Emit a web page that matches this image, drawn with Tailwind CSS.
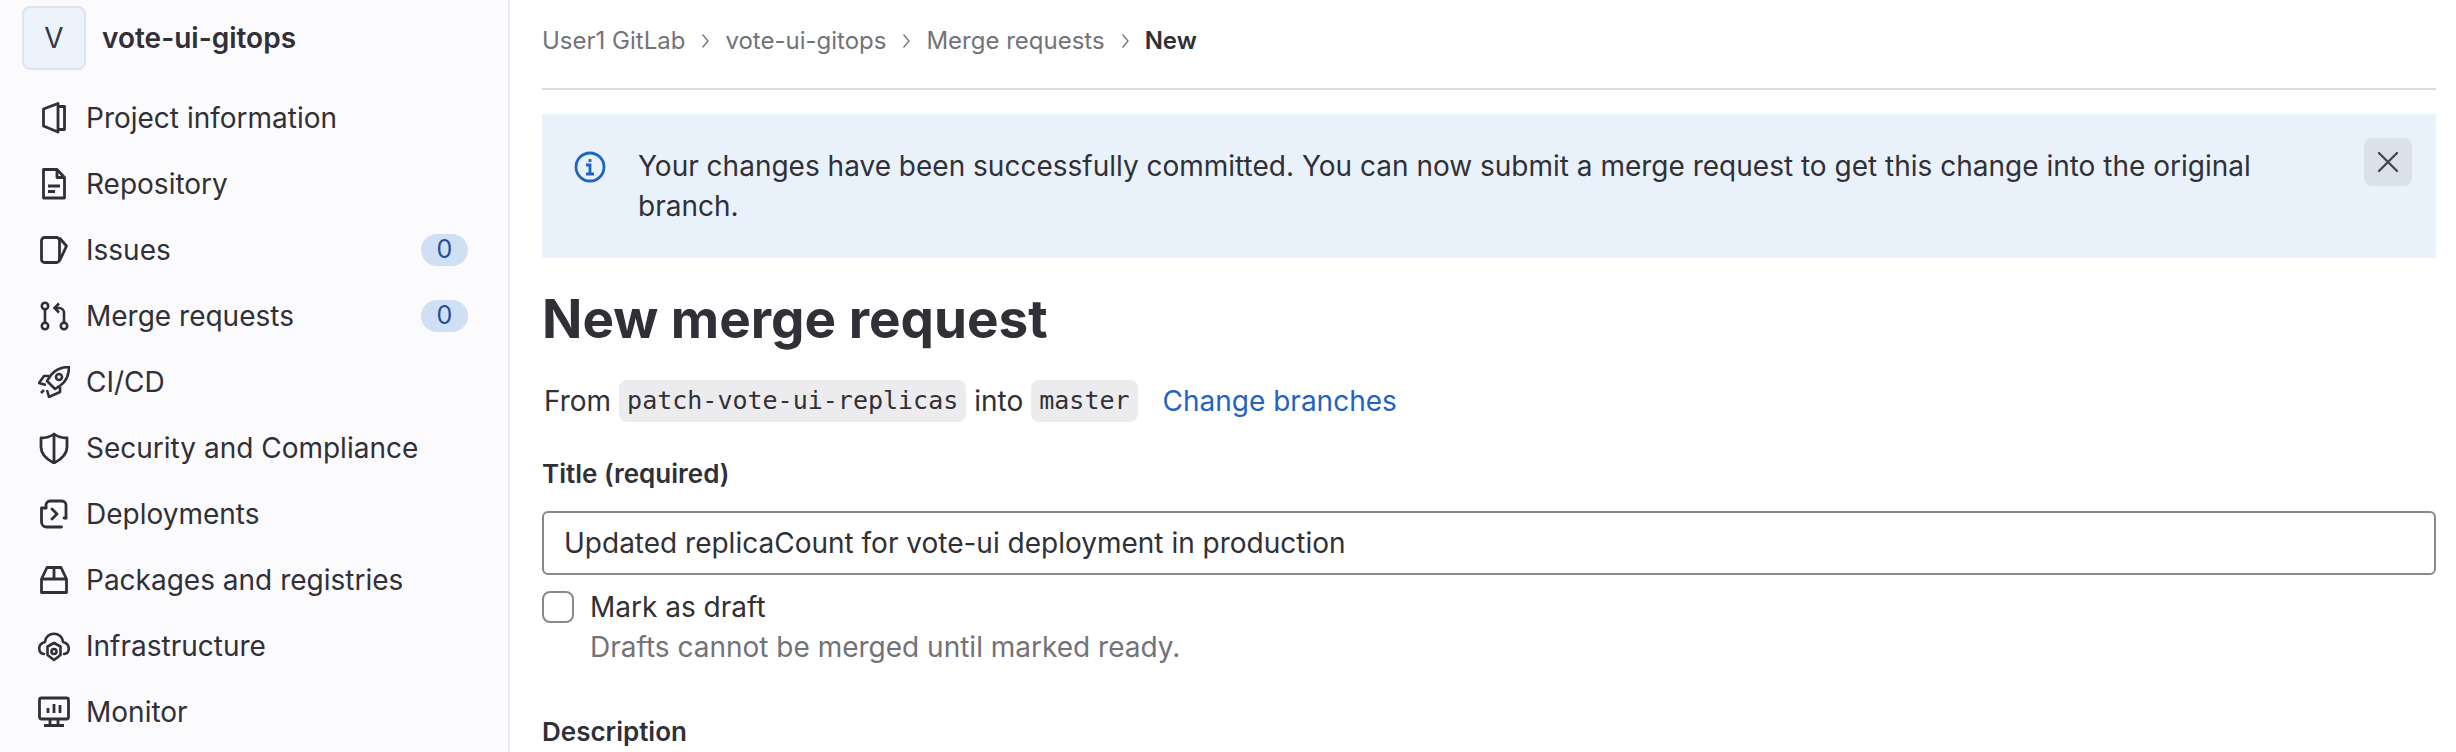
<!DOCTYPE html>
<html lang="en">
<head>
    <meta charset="UTF-8">
    <title>New merge request</title>
    <script src="https://cdn.jsdelivr.net/npm/@tailwindcss/browser@4"></script>
</head>
<body class="bg-white h-[752px] overflow-hidden font-['Inter',sans-serif] text-[#303030]">
    <div class="flex h-[752px]">
        <!-- Sidebar -->
        <aside class="w-[510px] shrink-0 h-full bg-[#fbfafd] border-r-2 border-[#e9e9ee] overflow-hidden">
            <div class="flex items-center h-[76px] pl-[22px] gap-4">
                <div class="w-16 h-16 flex items-center justify-center rounded-lg bg-[#edf3fb] border-2 border-[#dfe5ee] text-[28px] text-[#3a383f]">V</div>
                <span class="text-[28px] font-semibold text-[#303036]">vote-ui-gitops</span>
            </div>
            <nav class="flex flex-col text-[#303036] text-[28px]">
                <a class="flex items-center h-[66px] pl-[38px] mt-[9px]">
                    <svg class="w-[32px] h-[32px]" viewBox="0 0 32 32" fill="none" stroke="#303036" stroke-width="2.8" stroke-linejoin="round"><path d="M20 1.500 5.500 7v17L20 30z"/><path d="M20 4.500h6.500v23H20"/></svg>
                    <span class="ml-4">Project information</span>
                </a>
                <a class="flex items-center h-[66px] pl-[38px]">
                    <svg class="w-[32px] h-[32px]" viewBox="0 0 32 32" fill="none" stroke="#303036" stroke-width="2.8" stroke-linejoin="round"><path d="M5.500 1.500H19l7.500 8v20.500h-21z"/><path d="M19 1.500v8h7.500M10 18h12M10 23.500h7"/></svg>
                    <span class="ml-4">Repository</span>
                </a>
                <a class="flex items-center h-[66px] pl-[38px]">
                    <svg class="w-[32px] h-[32px]" viewBox="0 0 32 32" fill="none" stroke="#303036" stroke-width="2.8" stroke-linejoin="round"><rect x="3.500" y="3.500" width="18" height="25" rx="3"/><path d="M21.500 4l7 8-7 15"/></svg>
                    <span class="ml-4">Issues</span>
                    <span class="ml-auto mr-[40px] w-[47px] h-8 rounded-full bg-[#cfe0f5] text-[#1f4f9e] text-[25px] flex items-center justify-center">0</span>
                </a>
                <a class="flex items-center h-[66px] pl-[38px]">
                    <svg class="w-[32px] h-[32px]" viewBox="0 0 32 32" fill="none" stroke="#303036" stroke-width="2.600"><circle cx="7" cy="6" r="3.200"/><circle cx="7" cy="26" r="3.200"/><circle cx="26" cy="26" r="3.200"/><path d="M7 9.500v13M26 22.500V13a5 5 0 0 0-5-5h-4M21 3.500 16.500 8l4.500 4.500"/></svg>
                    <span class="ml-4">Merge requests</span>
                    <span class="ml-auto mr-[40px] w-[47px] h-8 rounded-full bg-[#cfe0f5] text-[#1f4f9e] text-[25px] flex items-center justify-center">0</span>
                </a>
                <a class="flex items-center h-[66px] pl-[38px]">
                    <svg class="w-[32px] h-[32px]" viewBox="0 0 32 32" fill="none" stroke="#303036" stroke-width="2.600" stroke-linejoin="round"><path d="M31 1c-8 0-14 3-18 8l-4 6 8 8 6-4c5-4 8-10 8-18z"/><circle cx="21" cy="11" r="3"/><path d="M11 10H6l-5 7 7 2M22 21v5l-11 5-2-7M6 24l-3 3"/></svg>
                    <span class="ml-4">CI/CD</span>
                </a>
                <a class="flex items-center h-[66px] pl-[38px]">
                    <svg class="w-[32px] h-[32px]" viewBox="0 0 32 32" fill="none" stroke="#303036" stroke-width="2.800" stroke-linejoin="round"><path d="M16 2c4 3 8 4 13 4v9c0 7-5 12-13 16C8 27 3 22 3 15V6c5 0 9-1 13-4z"/><path d="M16 2v29"/></svg>
                    <span class="ml-4">Security and Compliance</span>
                </a>
                <a class="flex items-center h-[66px] pl-[38px]">
                    <svg class="w-[32px] h-[32px]" viewBox="0 0 32 32" fill="none" stroke="#303036" stroke-width="2.800" stroke-linecap="round" stroke-linejoin="round"><path d="M8 10V7a4 4 0 0 1 4-4h12a4 4 0 0 1 4 4v13"/><path d="M8 10H3.500v14a5 5 0 0 0 5 5h15"/><path d="M14 11l5 5-5 5"/><path d="M28 20h-2"/></svg>
                    <span class="ml-4">Deployments</span>
                </a>
                <a class="flex items-center h-[66px] pl-[38px]">
                    <svg class="w-[32px] h-[32px]" viewBox="0 0 32 32" fill="none" stroke="#303036" stroke-width="2.800" stroke-linejoin="round"><path d="M3.500 15 9 3.500h14L28.500 15v13.500h-25z"/><path d="M3.500 15h25M16 3.500V15"/></svg>
                    <span class="ml-4">Packages and registries</span>
                </a>
                <a class="flex items-center h-[66px] pl-[38px]">
                    <svg class="w-[32px] h-[32px]" viewBox="0 0 32 32" fill="none" stroke="#303036" stroke-width="2.600" stroke-linejoin="round" stroke-linecap="round"><path d="M6 24c-6-1-7-10 1-12C8 1 24 1 25 12c8 2 7 11 1 12"/><path d="M16 13l6.500 3.500v8.500L16 30l-6.500-5v-8.500z"/><circle cx="16" cy="21.500" r="2.500"/></svg>
                    <span class="ml-4">Infrastructure</span>
                </a>
                <a class="flex items-center h-[66px] pl-[38px]">
                    <svg class="w-[32px] h-[32px]" viewBox="0 0 32 32" fill="none" stroke="#303036" stroke-width="2.800"><rect x="1.500" y="2" width="29" height="21" rx="2"/><path d="M16 8v9M10 12v5M22 9v8M12 24v5M20 24v5M6 29.500h20"/></svg>
                    <span class="ml-4">Monitor</span>
                </a>
            </nav>
        </aside>

        <!-- Main -->
        <main class="flex-1 min-w-0 pl-[32px] pr-5">
            <div class="h-[90px] border-b-2 border-[#dcdcde] flex items-center pb-[6px] text-[24px] text-[#737278]">
                <span>User1 GitLab</span>
                <svg class="w-4 h-4 mx-[12px]" viewBox="0 0 16 16" fill="none" stroke="#737278" stroke-width="1.300"><path d="M5.500 1.500 11 8l-5.500 6.500"/></svg>
                <span>vote-ui-gitops</span>
                <svg class="w-4 h-4 mx-[12px]" viewBox="0 0 16 16" fill="none" stroke="#737278" stroke-width="1.300"><path d="M5.500 1.500 11 8l-5.500 6.500"/></svg>
                <span>Merge requests</span>
                <svg class="w-4 h-4 mx-[12px]" viewBox="0 0 16 16" fill="none" stroke="#737278" stroke-width="1.300"><path d="M5.500 1.500 11 8l-5.500 6.500"/></svg>
                <span class="font-semibold text-[#303036]">New</span>
            </div>

            <div class="mt-6 h-[144px] bg-[#e9f2fb] flex relative">
                <svg class="w-8 h-8 ml-8 mt-[37px] shrink-0" viewBox="0 0 32 32" fill="none" stroke="#1f63c4" stroke-width="2.800"><circle cx="16" cy="16" r="14"/><path d="M12 14h4v9M12 23h8M16 8v3"/></svg>
                <p class="ml-8 mt-[32px] w-[1720px] text-[28px] leading-10 text-[#303036]">Your changes have been successfully committed. You can now submit a merge request to get this change into the original branch.</p>
                <button class="absolute right-6 top-6 w-12 h-12 rounded-lg bg-[#dbe1ea] flex items-center justify-center">
                    <svg class="w-6 h-6" viewBox="0 0 24 24" fill="none" stroke="#47464c" stroke-width="2.400" stroke-linecap="round"><path d="M3 3l18 18M21 3 3 21"/></svg>
                </button>
            </div>

            <h1 class="mt-[29px] text-[53px] leading-[64px] font-bold text-[#303036]">New merge request</h1>

            <div class="mt-[29px] flex items-center h-[42px] text-[28px] text-[#303036] pl-[2px]">
                <span>From</span>
                <code class="ml-2 px-2 h-[42px] flex items-center bg-[#ececef] rounded-lg font-['DejaVu_Sans_Mono',monospace] text-[25px]">patch-vote-ui-replicas</code>
                <span class="ml-2">into</span>
                <code class="ml-2 px-2 h-[42px] flex items-center bg-[#ececef] rounded-lg font-['DejaVu_Sans_Mono',monospace] text-[25px]">master</code>
                <a class="ml-[25px] text-[#1f63c4]">Change branches</a>
            </div>

            <label class="block mt-[32px] text-[26px] font-semibold text-[#303036]">Title (required)</label>
            <div class="mt-[18px] h-[64px] border-2 border-[#89888d] rounded-md flex items-center pl-5 text-[28px] text-[#303036]">Updated replicaCount for vote-ui deployment in production</div>

            <div class="mt-[12px] flex">
                <span class="w-8 h-8 mt-[4px] border-2 border-[#89888d] rounded-lg shrink-0"></span>
                <div class="ml-4">
                    <div class="text-[28px] leading-10">Mark as draft</div>
                    <div class="text-[28px] leading-10 text-[#737278]">Drafts cannot be merged until marked ready.</div>
                </div>
            </div>

            <label class="block mt-[45px] text-[26px] font-semibold text-[#303036]">Description</label>
        </main>
    </div>
</body>
</html>
